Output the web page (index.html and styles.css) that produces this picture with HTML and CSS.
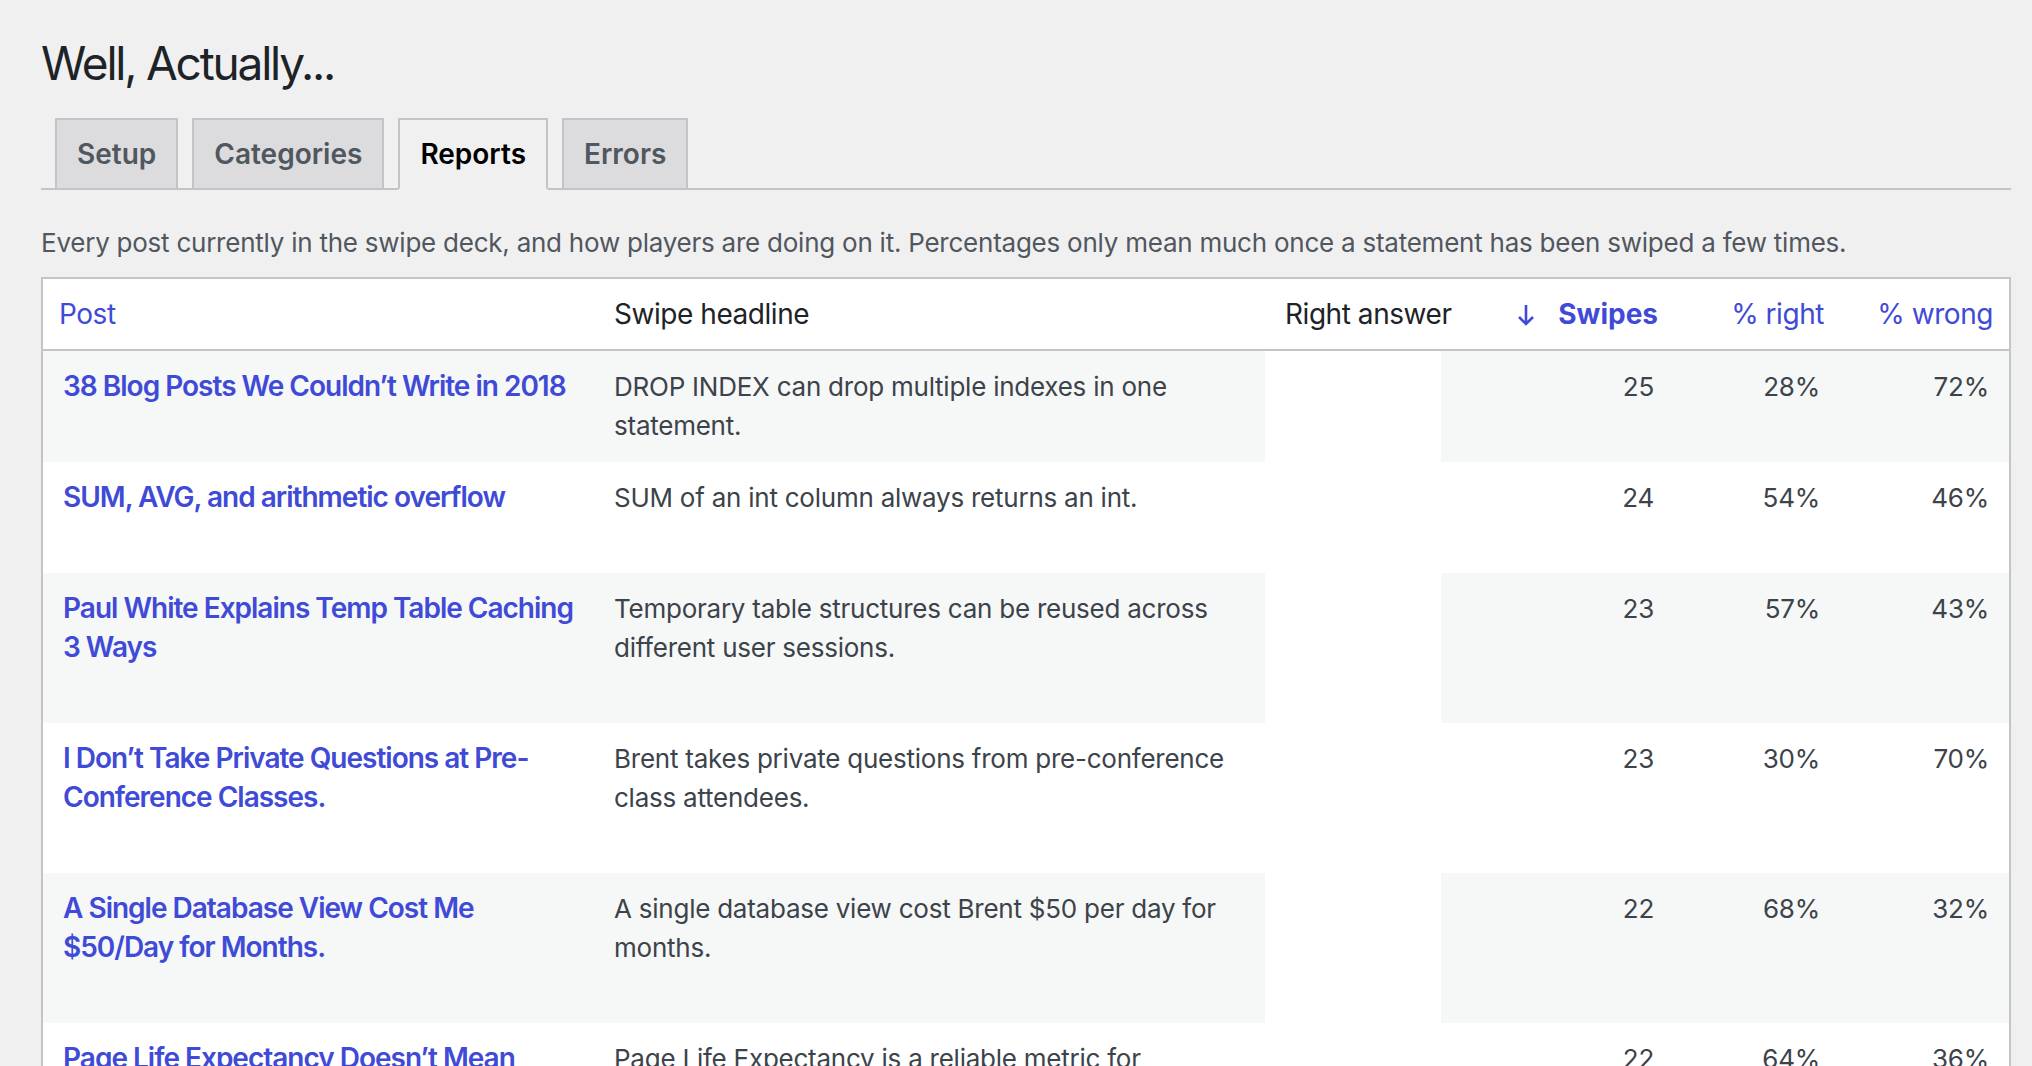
FILE: index.html
```html
<!DOCTYPE html>
<html lang="en">
    <head>
        <meta charset="UTF-8" />
        <title>Well, Actually... Reports</title>
        <link rel="stylesheet" href="styles.css">
    </head>
    <body>
        <div class="wrap">
            <h1>Well, Actually...</h1>

            <nav class="nav-tab-wrapper">
                <a class="nav-tab" href="#">Setup</a>
                <a class="nav-tab" href="#">Categories</a>
                <a class="nav-tab nav-tab-active" href="#">Reports</a>
                <a class="nav-tab" href="#">Errors</a>
            </nav>

            <p class="description">Every post currently in the swipe deck, and how players are doing on it. Percentages only mean much once a statement has been swiped a few times.</p>

            <table class="report-table">
                <colgroup>
                    <col class="c-post" />
                    <col class="c-headline" />
                    <col class="c-answer" />
                    <col class="c-swipes" />
                    <col class="c-right" />
                    <col class="c-wrong" />
                </colgroup>
                <thead>
                    <tr>
                        <th class="sortable"><a href="#">Post</a></th>
                        <th>Swipe headline</th>
                        <th>Right answer</th>
                        <th class="sortable num sorted">
                            <a href="#">
                                <svg class="sort-arrow" width="20" height="24" viewBox="0 0 20 24">
                                    <path d="M10 2v19M3 14l7 7 7-7" fill="none" stroke="currentColor" stroke-width="2.6" />
                                </svg>
                                <span>Swipes</span>
                            </a>
                        </th>
                        <th class="sortable num"><a href="#">% right</a></th>
                        <th class="sortable num"><a href="#">% wrong</a></th>
                    </tr>
                </thead>
                <tbody>
                    <tr>
                        <td class="col-post"><a class="row-title" href="#">38 Blog Posts We Couldn’t Write in 2018</a><div class="row-actions"></div></td>
                        <td>DROP INDEX can drop multiple indexes in one statement.</td>
                        <td class="col-answer"></td>
                        <td class="num">25</td>
                        <td class="num">28%</td>
                        <td class="num">72%</td>
                    </tr>
                    <tr>
                        <td class="col-post"><a class="row-title" href="#">SUM, AVG, and arithmetic overflow</a><div class="row-actions"></div></td>
                        <td>SUM of an int column always returns an int.</td>
                        <td class="col-answer"></td>
                        <td class="num">24</td>
                        <td class="num">54%</td>
                        <td class="num">46%</td>
                    </tr>
                    <tr>
                        <td class="col-post"><a class="row-title" href="#">Paul White Explains Temp Table Caching 3 Ways</a><div class="row-actions"></div></td>
                        <td>Temporary table structures can be reused across different user sessions.</td>
                        <td class="col-answer"></td>
                        <td class="num">23</td>
                        <td class="num">57%</td>
                        <td class="num">43%</td>
                    </tr>
                    <tr>
                        <td class="col-post"><a class="row-title" href="#">I Don’t Take Private Questions at Pre-Conference Classes.</a><div class="row-actions"></div></td>
                        <td>Brent takes private questions from pre-conference class attendees.</td>
                        <td class="col-answer"></td>
                        <td class="num">23</td>
                        <td class="num">30%</td>
                        <td class="num">70%</td>
                    </tr>
                    <tr>
                        <td class="col-post"><a class="row-title" href="#">A Single Database View Cost Me $50/Day for Months.</a><div class="row-actions"></div></td>
                        <td>A single database view cost Brent $50 per day for months.</td>
                        <td class="col-answer"></td>
                        <td class="num">22</td>
                        <td class="num">68%</td>
                        <td class="num">32%</td>
                    </tr>
                    <tr>
                        <td class="col-post"><a class="row-title" href="#">Page Life Expectancy Doesn’t Mean Jack, and You Should Stop Looking At It.</a><div class="row-actions"></div></td>
                        <td>Page Life Expectancy is a reliable metric for spotting memory pressure.</td>
                        <td class="col-answer"></td>
                        <td class="num">22</td>
                        <td class="num">64%</td>
                        <td class="num">36%</td>
                    </tr>
                </tbody>
            </table>
        </div>
    </body>
</html>
```

FILE: styles.css
```css
body {
    font-family: "Inter", "Liberation Sans", sans-serif;
    background-color: #f0f0f1;
    color: #3c434a;
    font-size: 26px;
    line-height: 39px;
    letter-spacing: -0.24px;
    margin: 0;
    padding: 0;
}

a {
    color: #3f4bd6;
    text-decoration: none;
}

.wrap {
    margin: 0 21px 0 41px;
}

h1 {
    font-size: 46px;
    font-weight: 400;
    line-height: 60px;
    letter-spacing: -2.2px;
    color: #1d2327;
    margin: 0;
    padding-top: 33px;
}

/* Tabs */
.nav-tab-wrapper {
    display: flex;
    margin-top: 25px;
    border-bottom: 2px solid #c3c4c7;
}

.nav-tab {
    margin-left: 14px;
    margin-bottom: -2px;
    padding: 10px 20px;
    font-size: 28px;
    line-height: 48px;
    font-weight: 600;
    letter-spacing: 0;
    color: #50575e;
    background-color: #dcdcde;
    border: 2px solid #c3c4c7;
}

.nav-tab-active {
    color: #000;
    background-color: #f0f0f1;
    border-bottom-color: #f0f0f1;
}

.description {
    margin: 33px 0 15px;
    color: #50575e;
}

/* Report table */
.report-table {
    width: 100%;
    table-layout: fixed;
    border-collapse: separate;
    border-spacing: 0;
    border: 2px solid #c3c4c7;
    background-color: #fff;
}

.c-post { width: 551px; }
.c-headline { width: 671px; }
.c-answer { width: 176px; }
.c-swipes { width: 233px; }
.c-right { width: 166px; }

.report-table th {
    text-align: left;
    font-weight: 400;
    font-size: 28px;
    line-height: 38px;
    letter-spacing: -0.45px;
    white-space: nowrap;
    color: #1d2327;
    padding: 16px 20px;
    border-bottom: 2px solid #c3c4c7;
}

.report-table th.sortable {
    padding: 16px;
}

.report-table th.num,
.report-table td.num {
    text-align: right;
}

.report-table th.sorted a {
    font-weight: 700;
    letter-spacing: 0;
}

.sort-arrow {
    vertical-align: -3px;
    margin-right: 16px;
}

.report-table td {
    vertical-align: top;
    padding: 16px 20px;
}

.report-table td.col-post {
    padding-right: 16px;
}

.report-table tbody tr:nth-child(odd) td {
    background-color: #f6f7f7;
}

.report-table tbody tr td.col-answer {
    background-color: #fff;
}

.row-title {
    font-size: 28px;
    font-weight: 600;
    letter-spacing: -1px;
}

.row-actions {
    height: 40px;
}
```
